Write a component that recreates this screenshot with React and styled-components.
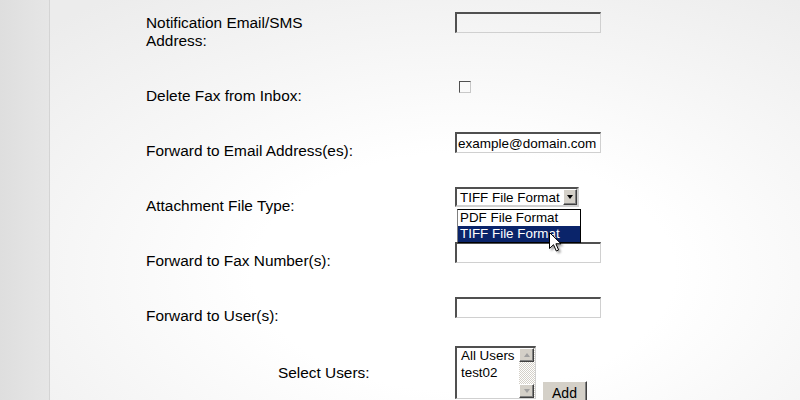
import styled, { createGlobalStyle } from "styled-components";

const GlobalStyle = createGlobalStyle`
  html, body {
    margin: 0;
    padding: 0;
    height: 100%;
  }
  body {
    font-family: "Liberation Sans", Arial, sans-serif;
    color: #000;
    background: radial-gradient(ellipse 75% 85% at 58% 68%, #ffffff 35%, #ececec 100%);
    overflow: hidden;
  }
`;

const Page = styled.div`
  display: flex;
  height: 400px;
`;

const Gutter = styled.div`
  width: 49px;
  flex-shrink: 0;
  background: linear-gradient(to right, #dedede, #e6e6e6);
  border-right: 1px solid #d4d4d4;
`;

const Main = styled.main`
  flex: 1;
  padding: 12px 0 0 96px;
`;

const Row = styled.div`
  display: grid;
  grid-template-columns: 309px auto;
  align-items: start;
  height: ${(p) => p.$height || 55}px;
`;

const Label = styled.label`
  display: block;
  max-width: 215px;
  padding-top: ${(p) => (p.$top ?? 10)}px;
  padding-left: ${(p) => p.$indent || 0}px;
  font-size: 15.4px;
  line-height: 18.3px;
`;

const Field = styled.div`
  position: relative;
  display: flex;
  align-items: flex-start;
  gap: 6px;
  padding-top: ${(p) => p.$top || 0}px;
`;

const inset = `
  border-top: 2px solid #505050;
  border-left: 2px solid #505050;
  border-bottom: 1px solid #d0d0d0;
  border-right: 1px solid #d0d0d0;
`;

const TextInput = styled.input`
  box-sizing: border-box;
  width: 146px;
  height: 21px;
  margin: 0;
  padding: 0 1px;
  ${inset}
  background: ${(p) => (p.$blank ? "transparent" : "#fff")};
  font-family: "Liberation Sans", Arial, sans-serif;
  font-size: 13.5px;
  color: #000;
  outline: none;
`;

const Checkbox = styled.input`
  appearance: none;
  box-sizing: border-box;
  width: 12px;
  height: 12px;
  margin: 0 0 0 4px;
  border-top: 1px solid #505050;
  border-left: 1px solid #505050;
  border-bottom: 1px solid #c8c8c8;
  border-right: 1px solid #c8c8c8;
  background: transparent;
`;

const Select = styled.div`
  box-sizing: border-box;
  display: flex;
  width: 124px;
  height: 20px;
  ${inset}
  border-right: 2px solid #d0d0d0;
  border-bottom: 2px solid #d0d0d0;
  background: #fff;
`;

const SelectValue = styled.span`
  flex: 1;
  overflow: hidden;
  white-space: nowrap;
  padding: 0 0 0 3px;
  font-size: 13.4px;
  line-height: 17px;
`;

const ArrowButton = styled.span`
  box-sizing: border-box;
  display: flex;
  align-items: center;
  justify-content: center;
  width: ${(p) => p.$w || 14}px;
  height: ${(p) => p.$h || 16}px;
  flex-shrink: 0;
  background: #d4d0c8;
  border-top: 1px solid #fff;
  border-left: 1px solid #fff;
  border-bottom: 1px solid #404040;
  border-right: 1px solid #404040;
  box-shadow: inset -1px -1px 0 #808080;
`;

const Triangle = styled.span`
  width: 0;
  height: 0;
  border-left: 3.5px solid transparent;
  border-right: 3.5px solid transparent;
  ${(p) => (p.$up ? "border-bottom" : "border-top")}: 4px solid ${(p) => p.$color || "#000"};
`;

const Dropdown = styled.ul`
  position: absolute;
  left: 2px;
  top: 22px;
  box-sizing: border-box;
  width: 124px;
  margin: 0;
  padding: 0;
  list-style: none;
  background: #fff;
  border: 1px solid #000;
  border-left-color: #808080;
  z-index: 2;
`;

const Option = styled.li`
  height: 16px;
  padding: 0 2px;
  font-size: 13.4px;
  line-height: 16px;
  white-space: nowrap;
  overflow: hidden;
  background: ${(p) => (p.$active ? "#0a246a" : "transparent")};
  color: ${(p) => (p.$active ? "#fff" : "#000")};
`;

const Cursor = styled.svg`
  position: absolute;
  left: 94px;
  top: 45px;
  z-index: 3;
  filter: drop-shadow(2px 2px 1px rgba(0, 0, 0, 0.35));
`;

const ListBox = styled.div`
  box-sizing: border-box;
  display: flex;
  width: 81px;
  height: 53px;
  ${inset}
  background: #fff;
`;

const ListItems = styled.ul`
  flex: 1;
  margin: 0;
  padding: 0 0 0 4px;
  list-style: none;
  font-size: 13.4px;
  line-height: 16.5px;
`;

const Scrollbar = styled.div`
  display: flex;
  flex-direction: column;
  width: 16px;
  background: repeating-conic-gradient(#d4d0c8 0 25%, #fff 0 50%) 0 0 / 2px 2px;
  justify-content: space-between;
`;

const Button = styled.button`
  box-sizing: border-box;
  width: 45px;
  height: 23px;
  margin: 35px 0 0;
  padding: 0;
  background: #d4d0c8;
  border-top: 1px solid #fff;
  border-left: 1px solid #fff;
  border-bottom: 1px solid #404040;
  border-right: 1px solid #404040;
  box-shadow: inset -1px -1px 0 #808080;
  font-family: "Liberation Sans", Arial, sans-serif;
  font-size: 14px;
  color: #000;
`;

export default function App() {
  return (
    <>
      <GlobalStyle />
      <Page>
        <Gutter />
        <Main>
          <Row $height={65}>
            <Label $top={2}>Notification Email/SMS Address:</Label>
            <Field>
              <TextInput $blank defaultValue="" />
            </Field>
          </Row>
          <Row>
            <Label>Delete Fax from Inbox:</Label>
            <Field $top={4}>
              <Checkbox type="checkbox" />
            </Field>
          </Row>
          <Row>
            <Label>Forward to Email Address(es):</Label>
            <Field>
              <TextInput defaultValue="example@domain.com" />
            </Field>
          </Row>
          <Row>
            <Label $top={9.5}>Attachment File Type:</Label>
            <Field>
              <Select>
                <SelectValue>TIFF File Format</SelectValue>
                <ArrowButton>
                  <Triangle />
                </ArrowButton>
              </Select>
              <Dropdown>
                <Option>PDF File Format</Option>
                <Option $active>TIFF File Format</Option>
              </Dropdown>
              <Cursor width="16" height="22" viewBox="0 0 16 22">
                <path
                  d="M0.5 0.5 L0.5 16.5 L4.5 12.7 L7.3 19 L9.6 18 L6.9 11.8 L12 11.8 Z"
                  fill="#fff"
                  stroke="#000"
                  strokeWidth="1"
                  strokeLinejoin="miter"
                />
              </Cursor>
            </Field>
          </Row>
          <Row>
            <Label $top={9.5}>Forward to Fax Number(s):</Label>
            <Field>
              <TextInput $blank defaultValue="" />
            </Field>
          </Row>
          <Row $height={49}>
            <Label>Forward to User(s):</Label>
            <Field>
              <TextInput $blank defaultValue="" />
            </Field>
          </Row>
          <Row>
            <Label $top={18} $indent={132}>Select Users:</Label>
            <Field>
              <ListBox>
                <ListItems>
                  <li>All Users</li>
                  <li>test02</li>
                </ListItems>
                <Scrollbar>
                  <ArrowButton $w={15} $h={14}>
                    <Triangle $up $color="#a0a0a0" />
                  </ArrowButton>
                  <ArrowButton $w={15} $h={14}>
                    <Triangle $color="#a0a0a0" />
                  </ArrowButton>
                </Scrollbar>
              </ListBox>
              <Button type="button">Add</Button>
            </Field>
          </Row>
        </Main>
      </Page>
    </>
  );
}
